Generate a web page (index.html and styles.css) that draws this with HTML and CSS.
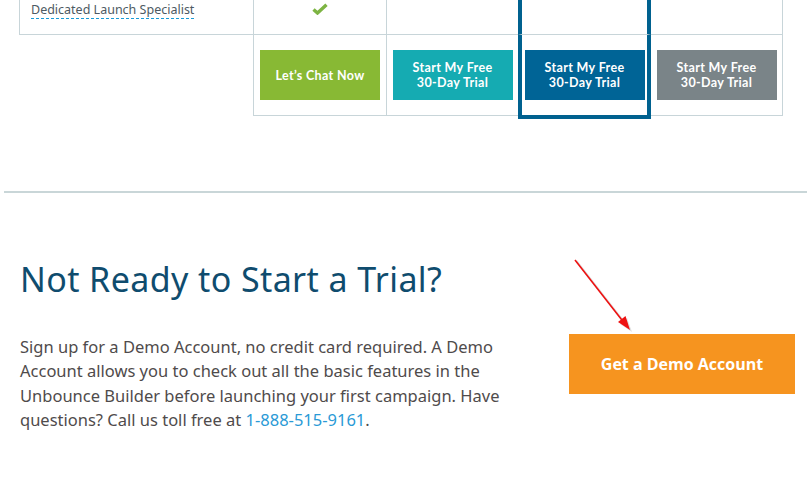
FILE: index.html
```
<!DOCTYPE html>
<html lang="en">
<head>
<meta charset="utf-8">
<title>Pricing</title>
<link rel="stylesheet" href="styles.css">
</head>
<body>
<div class="pricing">
  <div class="row row-feature">
    <div class="cell c0"><span class="tip">Dedicated Launch Specialist</span></div>
    <div class="cell c1"><svg class="check" width="16" height="12" viewBox="0 0 16 12"><path d="M1.5 6.5 L5.5 10 L14.5 1.8" fill="none" stroke="#7db443" stroke-width="3.4" stroke-linejoin="miter"/></svg></div>
    <div class="cell c2"></div>
    <div class="cell c3"></div>
    <div class="cell c4"></div>
  </div>
  <div class="row row-cta">
    <div class="cell c0 blank"></div>
    <div class="cell c1"><a class="btn btn-green">Let’s Chat Now</a></div>
    <div class="cell c2"><a class="btn btn-teal">Start My Free<br>30-Day Trial</a></div>
    <div class="cell c3"><a class="btn btn-blue">Start My Free<br>30-Day Trial</a></div>
    <div class="cell c4"><a class="btn btn-gray">Start My Free<br>30-Day Trial</a></div>
  </div>
</div>

<hr class="divider">

<section class="demo">
  <div class="demo-text">
    <h2>Not Ready to Start a Trial?</h2>
    <p>Sign up for a Demo Account, no credit card required. A Demo<br>Account allows you to check out all the basic features in the<br>Unbounce Builder before launching your first campaign. Have<br>questions? Call us toll free at <a class="phone">1-888-515-9161</a>.</p>
  </div>
  <div class="demo-action">
    <a class="btn-demo">Get a Demo Account</a>
  </div>
  <svg class="arrow" width="70" height="82" viewBox="0 0 70 82">
    <line x1="6.5" y1="11" x2="58" y2="77" stroke="#bbbbbb" stroke-width="2" opacity="0.5"/>
    <polygon points="62,82 50,74 57,68" fill="#cccccc" opacity="0.6"/>
    <line x1="5" y1="10" x2="55" y2="74" stroke="#ee1111" stroke-width="1.6"/>
    <polygon points="60,80 48,72 55.5,66" fill="#ee1111"/>
  </svg>
</section>
</body>
</html>
```
FILE: styles.css
```
* { box-sizing: border-box; }
html, body { margin: 0; padding: 0; background: #ffffff; }
body { font-family: "Open Sans", "Noto Sans", sans-serif; }

.pricing { margin-left: 19px; width: 764px; }
.row {
  display: grid;
  grid-template-columns: 235px 133px 131px 133px 132px;
  align-items: start;
}
.cell {
  border-bottom: 1px solid #c8d5d9;
  border-right: 1px solid #c8d5d9;
  display: flex;
  align-items: center;
  justify-content: center;
}
.row-feature .cell { height: 35px; }
.row-feature .c0 {
  border-left: 1px solid #c8d5d9;
  justify-content: flex-start;
  align-items: flex-start;
  padding: 3px 0 0 11px;
}
.c2 { border-right: none; }
.c3 { border-left: 4px solid #00618f; border-right: 4px solid #00618f; }
.row-cta .cell { height: 81px; }
.row-cta .c3 { height: 84px; border-bottom: 4px solid #00618f; }
.row-cta .blank { border-bottom: none; }
.row-feature .c1 { align-items: flex-start; padding-top: 3px; }

.tip {
  font-family: "Noto Sans", sans-serif;
  font-size: 12.5px;
  line-height: 14px;
  color: #4d5a63;
  border-bottom: 1px dashed #1a9bd7;
  padding-bottom: 1px;
}

.btn {
  width: 120px;
  height: 50px;
  display: flex;
  align-items: center;
  justify-content: center;
  text-align: center;
  color: #ffffff;
  font-family: Lato, "Open Sans", sans-serif;
  font-weight: 700;
  font-size: 12.5px;
  letter-spacing: 0.35px;
  line-height: 15px;
}
.btn-green { background: #88b934; }
.btn-teal { background: #15abb2; }
.btn-blue { background: #006496; }
.btn-gray { background: #7a8488; }

.divider {
  border: none;
  height: 2px;
  background: #c9d6d8;
  margin: 72px 0 0 4px;
}

.demo {
  position: relative;
  display: flex;
  padding: 0 12px 0 20px;
}
.demo-text { width: 549px; }
.demo h2 {
  margin: 66px 0 0 0;
  font-family: "Noto Sans", sans-serif;
  font-weight: 400;
  font-size: 34px;
  letter-spacing: 0.4px;
  line-height: 40px;
  color: #0f4c6e;
}
.demo p {
  margin: 36px 0 0 0;
  font-family: "Noto Sans", sans-serif;
  font-size: 16.5px;
  line-height: 24.4px;
  color: #4f4b4b;
}
.phone { color: #2a9ad6; }
.demo-action { padding-top: 141px; }
.btn-demo {
  display: flex;
  align-items: center;
  justify-content: center;
  width: 226px;
  height: 60px;
  background: #f6941f;
  color: #ffffff;
  font-family: "Open Sans", sans-serif;
  font-weight: 700;
  font-size: 16px;
}
.arrow { position: absolute; left: 570px; top: 57px; }
```
